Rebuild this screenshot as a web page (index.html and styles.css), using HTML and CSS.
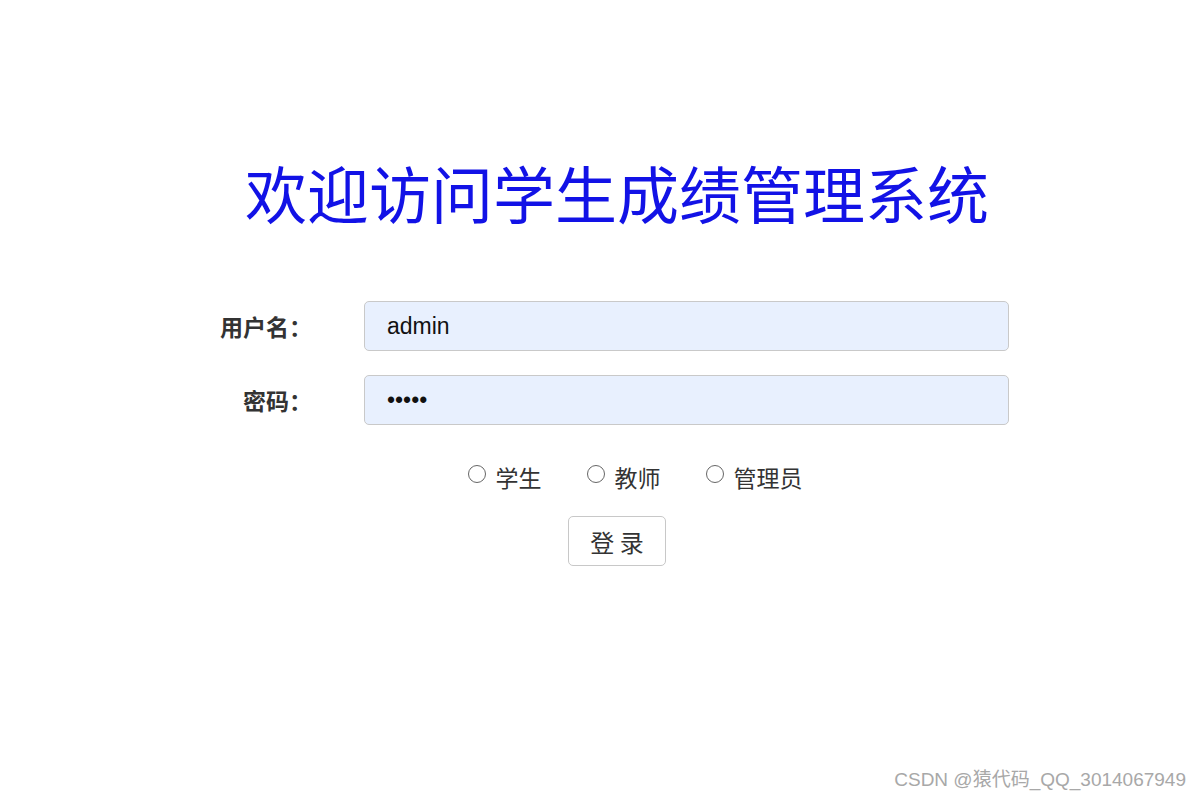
FILE: index.html
```html
<!DOCTYPE html>
<html lang="zh-CN">
<head>
<meta charset="utf-8">
<title>学生成绩管理系统</title>
<link rel="stylesheet" href="styles.css">
</head>
<body>
<main class="page">
  <h1 class="title">欢迎访问学生成绩管理系统</h1>
  <form class="login">
    <div class="row">
      <label class="label" for="user">用户名：</label>
      <input class="field" id="user" type="text" value="admin">
    </div>
    <div class="row">
      <label class="label" for="pwd">密码：</label>
      <input class="field" id="pwd" type="password" value="admin">
    </div>
    <div class="roles">
      <label class="role"><input type="radio" name="role" class="radio"><span>学生</span></label>
      <label class="role"><input type="radio" name="role" class="radio"><span>教师</span></label>
      <label class="role"><input type="radio" name="role" class="radio"><span>管理员</span></label>
    </div>
    <div class="actions">
      <button type="button" class="btn">登 录</button>
    </div>
  </form>
</main>
<div class="watermark">CSDN @猿代码_QQ_3014067949</div>
</body>
</html>
```
FILE: styles.css
```css
html, body {
  margin: 0;
  padding: 0;
  background: #ffffff;
}
body {
  width: 1200px;
  height: 800px;
  position: relative;
  overflow: hidden;
  font-family: "Liberation Sans", "Noto Sans CJK SC", sans-serif;
}
.page {
  box-sizing: border-box;
  width: 1200px;
  display: flex;
  flex-direction: column;
  align-items: center;
  padding-top: 155px;
  padding-left: 34px;
}
.title {
  margin: 0;
  font-weight: normal;
  font-size: 62px;
  line-height: 74px;
  color: #1212e6;
  font-family: "Noto Sans CJK SC", sans-serif;
}
.login {
  margin-top: 72px;
  width: 100%;
  display: flex;
  flex-direction: column;
}
.row {
  display: grid;
  grid-template-columns: 266px 645px;
  column-gap: 64px;
  align-items: center;
  margin-bottom: 24px;
}
.label {
  justify-self: end;
  font-family: "Noto Sans CJK SC", sans-serif;
  font-weight: bold;
  font-size: 23px;
  color: #333;
  margin-right: -12px;
}
.field {
  box-sizing: border-box;
  height: 50px;
  width: 645px;
  border: 1px solid #c9c9c9;
  border-radius: 5px;
  background: #e8f0fe;
  padding: 0 22px;
  font-family: "Liberation Sans", sans-serif;
  font-size: 23px;
  color: #111;
  outline: none;
}
.roles {
  display: flex;
  justify-content: center;
  gap: 45px;
  margin-top: 12px;
  padding-left: 36px;
  font-family: "Noto Sans CJK SC", sans-serif;
  font-size: 23px;
  color: #333;
}
.role {
  display: flex;
  align-items: center;
  gap: 10px;
  line-height: 32px;
}
.radio {
  appearance: none;
  -webkit-appearance: none;
  margin: 0;
  width: 18px;
  height: 18px;
  border: 1.6px solid #666;
  border-radius: 50%;
  background: #fff;
  box-sizing: border-box;
  position: relative;
  top: -3px;
}
.actions {
  display: flex;
  justify-content: center;
  margin-top: 23px;
}
.btn {
  width: 98px;
  height: 50px;
  border: 1px solid #c8c8c8;
  border-radius: 5px;
  background: #fff;
  font-family: "Noto Sans CJK SC", sans-serif;
  font-size: 24px;
  color: #333;
  padding: 0;
}
.watermark {
  position: absolute;
  right: 14px;
  bottom: 9px;
  font-family: "Liberation Sans", "Noto Sans CJK SC", sans-serif;
  font-size: 19px;
  color: #a8a8a8;
  text-shadow: 0 0 2px #fff;
}
```
